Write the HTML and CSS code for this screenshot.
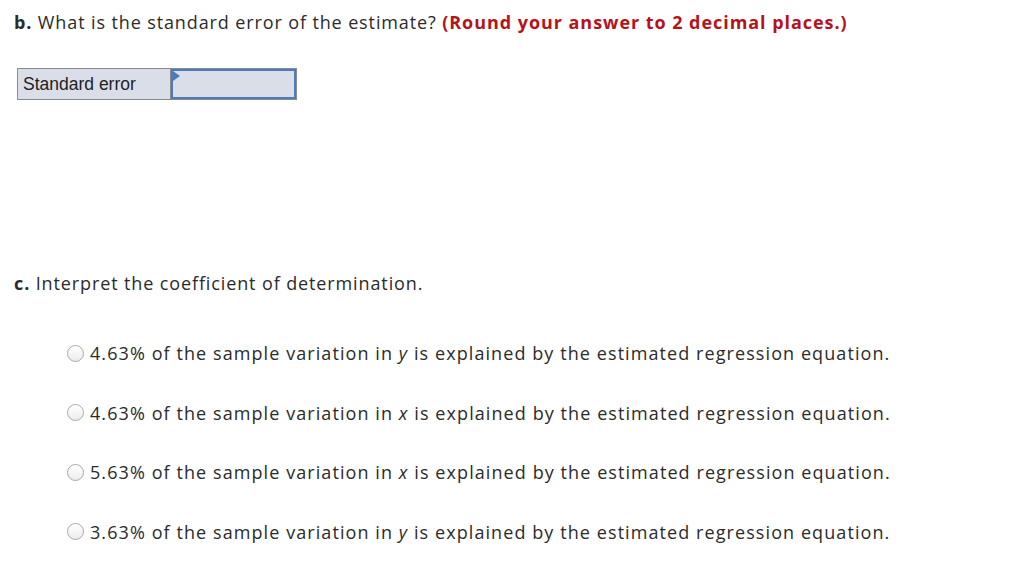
FILE: index.html
```html
<!DOCTYPE html>
<html lang="en">
<head>
  <meta charset="UTF-8">
  <title>Regression Question</title>
  <link rel="stylesheet" href="styles.css">
</head>
<body>
  <div class="part part-b">
    <p class="question"><strong>b.</strong> What is the standard error of the estimate? <span class="note">(Round your answer to 2 decimal places.)</span></p>
    <table class="answer-table">
      <tr>
        <td class="label-cell">Standard error</td>
        <td class="input-cell"><span class="flag"></span><input type="text" class="answer-input"></td>
      </tr>
    </table>
  </div>

  <div class="part part-c">
    <p class="question"><strong>c.</strong> Interpret the coefficient of determination.</p>
    <ul class="choices">
      <li><span class="radio"></span><span>4.63% of the sample variation in <i>y</i> is explained by the estimated regression equation.</span></li>
      <li><span class="radio"></span><span>4.63% of the sample variation in <i>x</i> is explained by the estimated regression equation.</span></li>
      <li><span class="radio"></span><span>5.63% of the sample variation in <i>x</i> is explained by the estimated regression equation.</span></li>
      <li><span class="radio"></span><span>3.63% of the sample variation in <i>y</i> is explained by the estimated regression equation.</span></li>
    </ul>
  </div>
</body>
</html>
```

FILE: styles.css
```css
body {
  font-family: "Open Sans", Lato, sans-serif;
  color: #2b2b2b;
  background-color: white;
  margin: 0;
  padding: 0;
}

.question {
  margin: 0;
  font-size: 18px;
  line-height: 22px;
  letter-spacing: 0.88px;
}

.question strong {
  font-weight: bold;
}

.note {
  color: #b5121b;
  font-weight: bold;
  letter-spacing: 0.95px;
}

.part-b {
  padding: 11px 0 0 14px;
}

.answer-table {
  margin: 35px 0 0 3px;
  border-collapse: collapse;
}

.answer-table td {
  border: 1px solid #8a8a8a;
  background-color: #d9dee8;
  height: 30px;
  padding: 0;
}

.label-cell {
  width: 147px;
  font-family: "Liberation Sans", Arial, sans-serif;
  font-size: 17.5px;
  color: #222;
  padding: 0 0 0 5px !important;
}

.input-cell {
  width: 125px;
  position: relative;
}

.answer-input {
  box-sizing: border-box;
  display: block;
  width: 100%;
  height: 30px;
  border: 2px solid #4a7bbf;
  background-color: #d9dee8;
  margin: 0;
  outline: none;
}

.flag {
  position: absolute;
  left: 2px;
  top: 2px;
  width: 0;
  height: 0;
  border-top: 5px solid transparent;
  border-bottom: 5px solid transparent;
  border-left: 7px solid #4a7bbf;
}

.part-c {
  padding: 172px 0 0 14px;
}

.choices {
  list-style: none;
  margin: 48px 0 0 0;
  padding: 0 0 0 53px;
}

.choices li {
  display: flex;
  align-items: center;
  font-size: 18px;
  height: 22px;
  margin-bottom: 37.5px;
  letter-spacing: 1.08px;
}

.radio {
  flex: none;
  width: 17px;
  height: 17px;
  box-sizing: border-box;
  border: 1px solid #a9a9a9;
  border-radius: 50%;
  background: linear-gradient(#fff, #ececec);
  margin-right: 6px;
}
```
